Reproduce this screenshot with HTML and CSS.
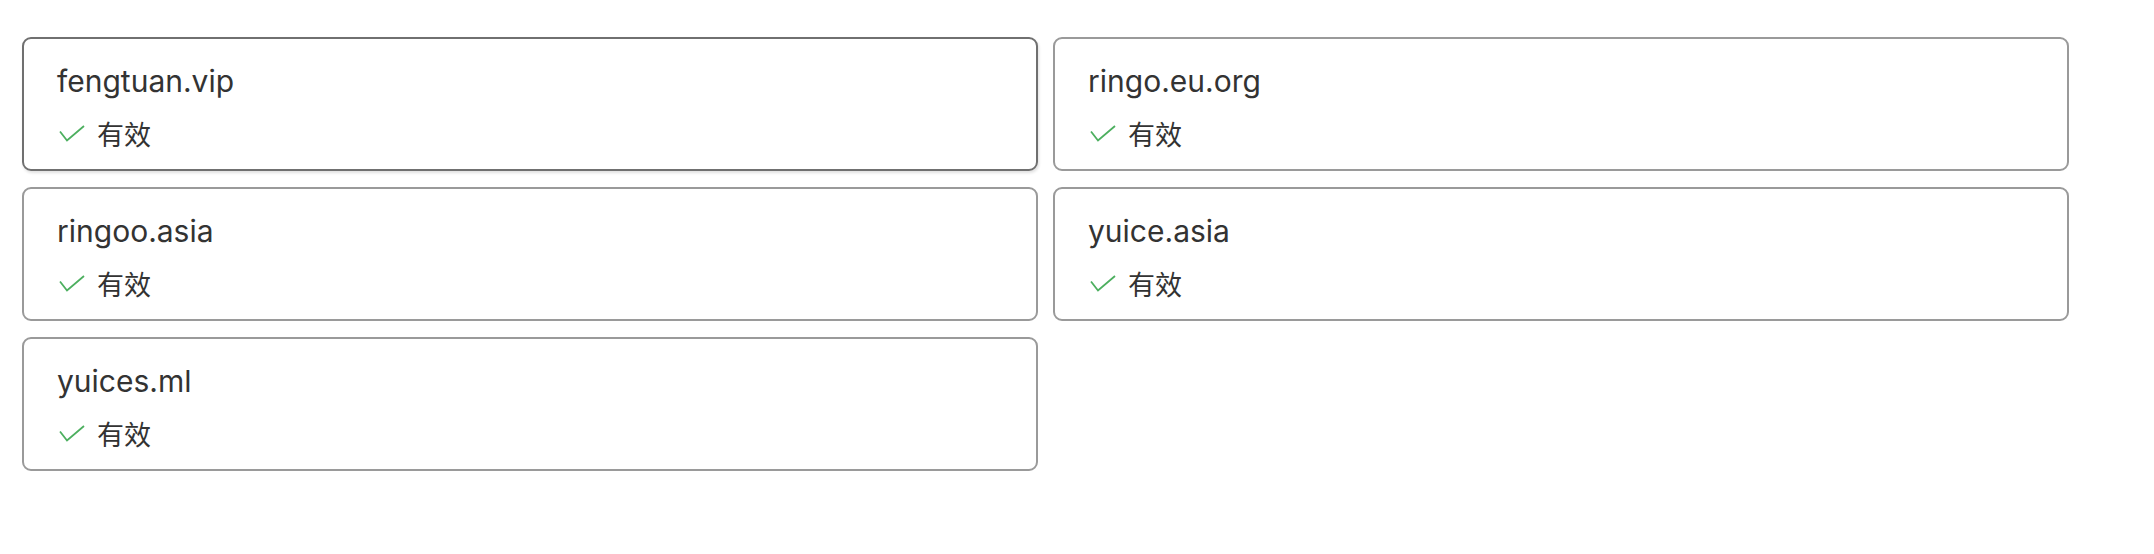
FILE: index.html
```html
<!DOCTYPE html>
<html lang="zh-CN">
<head>
<meta charset="utf-8">
<title>Domains</title>
<link rel="stylesheet" href="styles.css">
</head>
<body>
<div class="grid">
  <div class="card card-active">
    <div class="domain">fengtuan.vip</div>
    <div class="status"><svg class="check" viewBox="0 0 26 18" width="26" height="18"><path d="M1 6.5 L8 15.5 L25 1" fill="none" stroke="#4caf5f" stroke-width="1.8"/></svg><span>有效</span></div>
  </div>
  <div class="card">
    <div class="domain">ringo.eu.org</div>
    <div class="status"><svg class="check" viewBox="0 0 26 18" width="26" height="18"><path d="M1 6.5 L8 15.5 L25 1" fill="none" stroke="#4caf5f" stroke-width="1.8"/></svg><span>有效</span></div>
  </div>
  <div class="card">
    <div class="domain">ringoo.asia</div>
    <div class="status"><svg class="check" viewBox="0 0 26 18" width="26" height="18"><path d="M1 6.5 L8 15.5 L25 1" fill="none" stroke="#4caf5f" stroke-width="1.8"/></svg><span>有效</span></div>
  </div>
  <div class="card">
    <div class="domain">yuice.asia</div>
    <div class="status"><svg class="check" viewBox="0 0 26 18" width="26" height="18"><path d="M1 6.5 L8 15.5 L25 1" fill="none" stroke="#4caf5f" stroke-width="1.8"/></svg><span>有效</span></div>
  </div>
  <div class="card">
    <div class="domain">yuices.ml</div>
    <div class="status"><svg class="check" viewBox="0 0 26 18" width="26" height="18"><path d="M1 6.5 L8 15.5 L25 1" fill="none" stroke="#4caf5f" stroke-width="1.8"/></svg><span>有效</span></div>
  </div>
</div>
</body>
</html>
```
FILE: styles.css
```css
html, body {
  margin: 0;
  padding: 0;
  background: #ffffff;
}
body {
  font-family: Inter, "Noto Sans", "Noto Sans CJK SC", sans-serif;
  color: #333333;
}
.grid {
  display: grid;
  grid-template-columns: 1016px 1016px;
  column-gap: 15px;
  row-gap: 16px;
  padding: 37px 0 0 22px;
}
.card {
  box-sizing: border-box;
  height: 134px;
  border: 2px solid #9a9a9a;
  border-radius: 9px;
  padding: 22px 33px 0 33px;
}
.card-active {
  border-color: #707070;
  box-shadow: 1px 2px 3px rgba(0, 0, 0, 0.12);
}
.domain {
  font-size: 30px;
  line-height: 40px;
  letter-spacing: 0;
}
.status {
  display: flex;
  align-items: center;
  margin-top: 17px;
  height: 32px;
}
.check {
  margin-left: 2px;
  margin-right: 12px;
  flex: none;
}
.status span {
  font-family: "Noto Sans CJK SC", sans-serif;
  font-size: 27px;
  line-height: 32px;
  color: #333333;
}
```
